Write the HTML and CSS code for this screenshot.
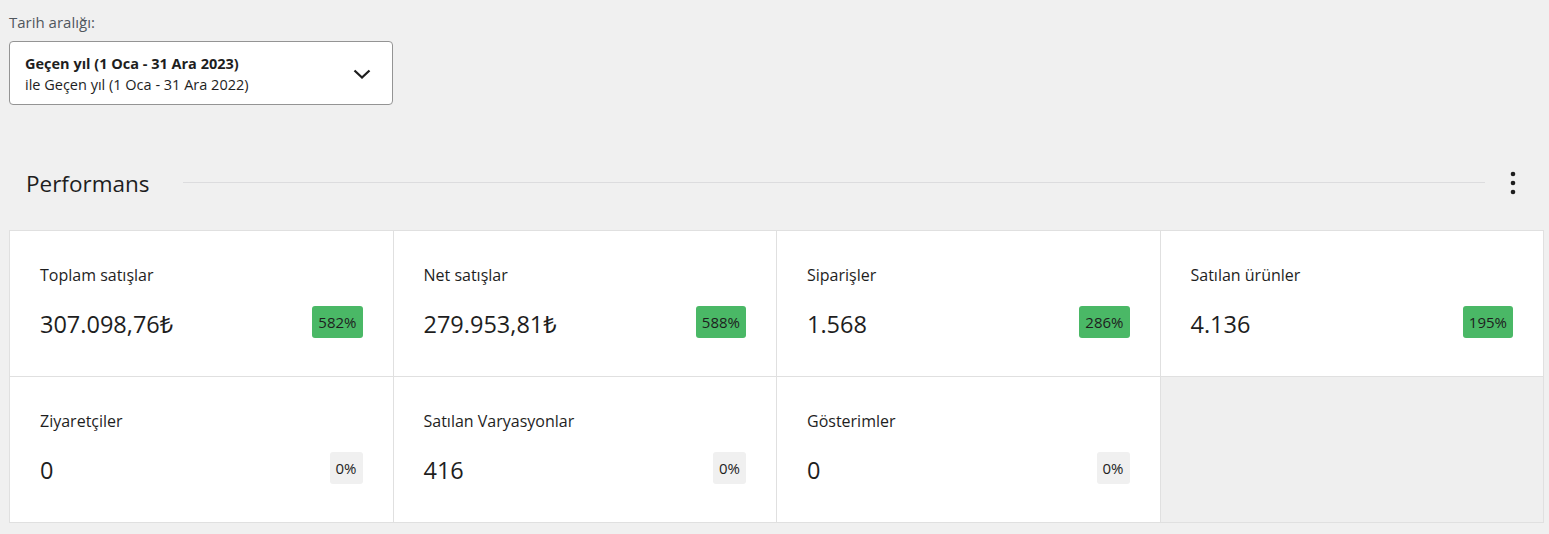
FILE: index.html
```html
<!DOCTYPE html>
<html lang="tr">

<head>
   <meta charset="UTF-8">
   <meta name="viewport" content="width=device-width, initial-scale=1.0">
   <title>Analitik - Genel bakış</title>

   <link rel="stylesheet" href="styles.css">
</head>

<body>
   <p class="range-label">Tarih aralığı:</p>

   <button class="range-picker">
      <span class="range-text">
         <strong>Geçen yıl (1 Oca - 31 Ara 2023)</strong>
         <span>ile Geçen yıl (1 Oca - 31 Ara 2022)</span>
      </span>
      <svg class="chevron" width="24" height="24" viewBox="0 0 24 24">
         <polyline points="4.5,8.5 12,15.5 19.5,8.5" fill="none" stroke="#1e1e1e" stroke-width="2.3"/>
      </svg>
   </button>

   <div class="section-header">
      <h2 class="section-title">Performans</h2>
      <hr class="section-line">
      <button class="more-btn">
         <svg width="24" height="24" viewBox="0 0 24 24">
            <circle cx="12" cy="3" r="2.3" fill="#1e1e1e"/>
            <circle cx="12" cy="12" r="2.3" fill="#1e1e1e"/>
            <circle cx="12" cy="21" r="2.3" fill="#1e1e1e"/>
         </svg>
      </button>
   </div>

   <ul class="summary">
      <li class="summary-item">
         <p class="summary-label">Toplam satışlar</p>
         <div class="summary-row">
            <span class="summary-value">307.098,76₺</span>
            <span class="delta up">582%</span>
         </div>
      </li>
      <li class="summary-item">
         <p class="summary-label">Net satışlar</p>
         <div class="summary-row">
            <span class="summary-value">279.953,81₺</span>
            <span class="delta up">588%</span>
         </div>
      </li>
      <li class="summary-item">
         <p class="summary-label">Siparişler</p>
         <div class="summary-row">
            <span class="summary-value">1.568</span>
            <span class="delta up">286%</span>
         </div>
      </li>
      <li class="summary-item">
         <p class="summary-label">Satılan ürünler</p>
         <div class="summary-row">
            <span class="summary-value">4.136</span>
            <span class="delta up">195%</span>
         </div>
      </li>
      <li class="summary-item">
         <p class="summary-label">Ziyaretçiler</p>
         <div class="summary-row">
            <span class="summary-value">0</span>
            <span class="delta">0%</span>
         </div>
      </li>
      <li class="summary-item">
         <p class="summary-label">Satılan Varyasyonlar</p>
         <div class="summary-row">
            <span class="summary-value">416</span>
            <span class="delta">0%</span>
         </div>
      </li>
      <li class="summary-item">
         <p class="summary-label">Gösterimler</p>
         <div class="summary-row">
            <span class="summary-value">0</span>
            <span class="delta">0%</span>
         </div>
      </li>
      <li class="summary-item empty"></li>
   </ul>
</body>
</html>
```

FILE: styles.css
```css
body{
   margin: 0;
   padding: 0 5px 0 9px;
   background-color: #f0f0f0;
   color: #1e1e1e;
   font-family: "Open Sans", "Noto Sans", Arial, sans-serif;
}

.range-label{
   margin: 12px 0 9px;
   font-size: 15px;
   line-height: 20px;
   color: #50575e;
}

.range-picker{
   display: flex;
   align-items: center;
   justify-content: space-between;
   width: 384px;
   height: 64px;
   padding: 2px 18px 0 15px;
   background-color: white;
   border: 1px solid #949494;
   border-radius: 4px;
   font-family: inherit;
   text-align: left;
   cursor: pointer;
}

.range-text{
   display: flex;
   flex-direction: column;
   font-size: 14.5px;
   line-height: 21px;
   color: #1e1e1e;
}

.range-text strong{
   font-weight: 700;
}

.chevron{
   width: 24px;
   height: 24px;
}

.section-header{
   display: flex;
   align-items: center;
   height: 40px;
   margin-top: 58px;
   padding: 0 19px 0 17px;
}

.section-title{
   margin: 0;
   font-size: 22.5px;
   font-weight: 400;
}

.section-line{
   flex: 1;
   margin: 0 16px 2px 33px;
   border: none;
   border-top: 1px solid #dcdcde;
}

.more-btn{
   display: flex;
   width: 24px;
   height: 24px;
   padding: 0;
   background: transparent;
   border: none;
   cursor: pointer;
}

.summary{
   display: grid;
   grid-template-columns: repeat(4, 1fr);
   margin: 27px 0 0;
   padding: 0;
   list-style: none;
   background-color: white;
   border-top: 1px solid #e0e0e0;
   border-left: 1px solid #e0e0e0;
}

.summary-item{
   height: 146px;
   padding: 32px 30px 0;
   border-right: 1px solid #e0e0e0;
   border-bottom: 1px solid #e0e0e0;
   box-sizing: border-box;
}

.summary-item.empty{
   background-color: #efefef;
}

.summary-label{
   margin: 0;
   font-size: 16px;
   line-height: 24px;
}

.summary-row{
   display: flex;
   align-items: center;
   justify-content: space-between;
   height: 36px;
   margin-top: 17px;
}

.summary-value{
   padding-top: 4px;
   font-size: 23.5px;
   line-height: 36px;
}

.delta{
   height: 32px;
   min-width: 32px;
   padding: 0 6px;
   box-sizing: border-box;
   border-radius: 3px;
   background-color: #f0f0f0;
   font-size: 15px;
   line-height: 32px;
   text-align: center;
   color: #1e1e1e;
}

.delta.up{
   background-color: #4ab866;
}
```
